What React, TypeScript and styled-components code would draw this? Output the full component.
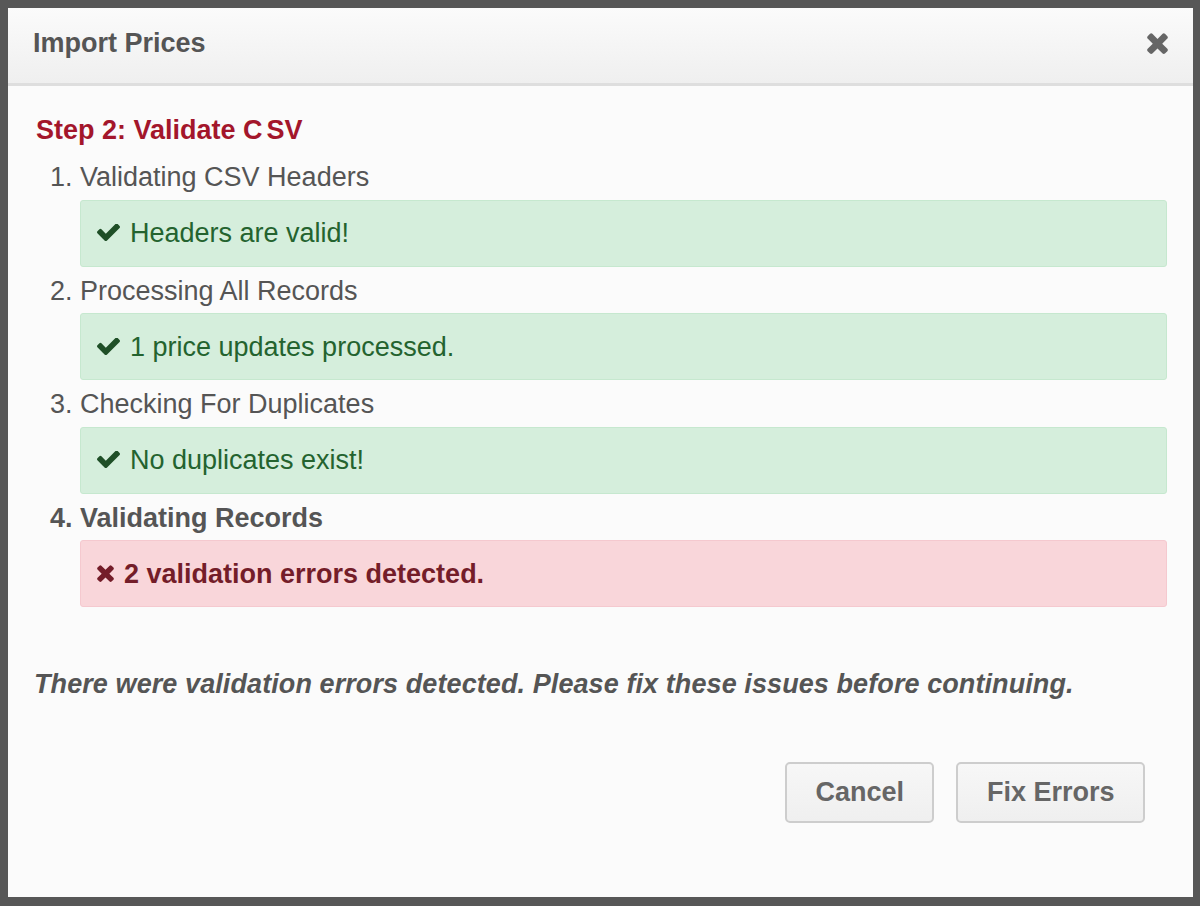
import React from "react";
import styled, { createGlobalStyle } from "styled-components";

const Global = createGlobalStyle`
  html, body { margin: 0; padding: 0; background: #575757; }
  body { font-family: "Liberation Sans", Arial, sans-serif; }
  #root { padding: 8px 7px 9px 8px; }
`;

const Dialog = styled.div`
  width: 1185px;
  height: 889px;
  background: #fbfbfb;
  display: flex;
  flex-direction: column;
  box-sizing: border-box;
`;

const Header = styled.div`
  height: 78px;
  box-sizing: border-box;
  padding: 0 24px 5px 25px;
  display: flex;
  align-items: center;
  justify-content: space-between;
  background: linear-gradient(#fbfbfb, #efefef);
  border-bottom: 3px solid #dedede;
`;

const Title = styled.h1`
  margin: 0;
  font-size: 27px;
  font-weight: bold;
  color: #555;
  line-height: 40px;
`;

const Close = styled.button`
  border: 0;
  background: none;
  padding: 0;
  width: 22px;
  height: 22px;
  display: flex;
  margin-top: 2px;
  cursor: pointer;
  color: #666;
`;

const Body = styled.div`
  padding: 22px 26px 0 26px;
`;

const StepHeading = styled.h2`
  margin: 0;
  padding-left: 2px;
  font-size: 27px;
  line-height: 45px;
  font-weight: bold;
  color: #a3162b;
`;

const Spaced = styled.span`
  letter-spacing: 4px;
`;

const Steps = styled.ol`
  margin: 0;
  padding: 0 0 0 46px;
  font-size: 27px;
  color: #555;
`;

const Step = styled.li<{ $current?: boolean }>`
  font-weight: ${(p) => (p.$current ? "bold" : "normal")};
`;

const StepLabel = styled.div`
  padding-top: 3px;
  line-height: 43.5px;
`;

const Alert = styled.div<{ $kind: "success" | "danger" }>`
  display: flex;
  align-items: center;
  gap: 10px;
  padding: 12.5px 16px;
  line-height: 40px;
  font-size: 27px;
  border-radius: 3px;
  border: 1px solid ${(p) => (p.$kind === "success" ? "#c6e8cf" : "#f5c9cf")};
  background: ${(p) => (p.$kind === "success" ? "#d5eedc" : "#f9d6da")};
  color: ${(p) => (p.$kind === "success" ? "#24632f" : "#741d29")};
  font-weight: ${(p) => (p.$kind === "success" ? "normal" : "bold")};
`;

const Note = styled.p`
  margin: 57px 0 0 0;
  font-size: 27px;
  line-height: 40px;
  font-style: italic;
  font-weight: bold;
  letter-spacing: 0.09px;
  color: #555;
`;

const Footer = styled.div`
  display: flex;
  justify-content: flex-end;
  gap: 22px;
  padding: 58px 48px 0 0;
`;

const Button = styled.button`
  height: 61px;
  padding: 0 28.5px;
  box-sizing: border-box;
  border: 2px solid #cdcdcd;
  border-radius: 5px;
  background: linear-gradient(#f7f7f7, #efefef);
  font-family: "Liberation Sans", Arial, sans-serif;
  font-size: 27px;
  font-weight: bold;
  color: #666;
  cursor: pointer;
`;

const CheckIcon = () => (
  <svg width="23" height="18" viewBox="121 430 1550 1092" fill="#1f4f27">
    <path d="M1671 566q0 40-28 68l-724 724-136 136q-28 28-68 28t-68-28l-136-136-362-362q-28-28-28-68t28-68l136-136q28-28 68-28t68 28l294 295 656-657q28-28 68-28t68 28l136 136q28 28 28 68z" />
  </svg>
);

const TimesIcon = ({ size, color }: { size: number; color: string }) => (
  <svg width={size} height={size} viewBox="110 346 1188 1208" fill={color}>
    <path d="M1298 1322q0 40-28 68l-136 136q-28 28-68 28t-68-28l-294-294-294 294q-28 28-68 28t-68-28l-136-136q-28-28-28-68t28-68l294-294-294-294q-28-28-28-68t28-68l136-136q28-28 68-28t68 28l294 294 294-294q28-28 68-28t68 28l136 136q28 28 28 68t-28 68l-294 294 294 294q28 28 28 68z" />
  </svg>
);

const steps = [
  { label: "Validating CSV Headers", kind: "success" as const, msg: "Headers are valid!" },
  { label: "Processing All Records", kind: "success" as const, msg: "1 price updates processed." },
  { label: "Checking For Duplicates", kind: "success" as const, msg: "No duplicates exist!" },
  { label: "Validating Records", kind: "danger" as const, msg: "2 validation errors detected.", current: true },
];

export default function App() {
  return (
    <>
      <Global />
      <Dialog>
        <Header>
          <Title>Import Prices</Title>
          <Close aria-label="Close">
            <TimesIcon size={21} color="#666" />
          </Close>
        </Header>
        <Body>
          <StepHeading>
            Step 2: Validate <Spaced>C</Spaced>SV
          </StepHeading>
          <Steps>
            {steps.map((s) => (
              <Step key={s.label} $current={s.current}>
                <StepLabel>{s.label}</StepLabel>
                <Alert $kind={s.kind}>
                  {s.kind === "success" ? <CheckIcon /> : <TimesIcon size={17} color="#741d29" />}
                  <span>{s.msg}</span>
                </Alert>
              </Step>
            ))}
          </Steps>
          <Note>There were validation errors detected. Please fix these issues before continuing.</Note>
        </Body>
        <Footer>
          <Button>Cancel</Button>
          <Button>Fix Errors</Button>
        </Footer>
      </Dialog>
    </>
  );
}
